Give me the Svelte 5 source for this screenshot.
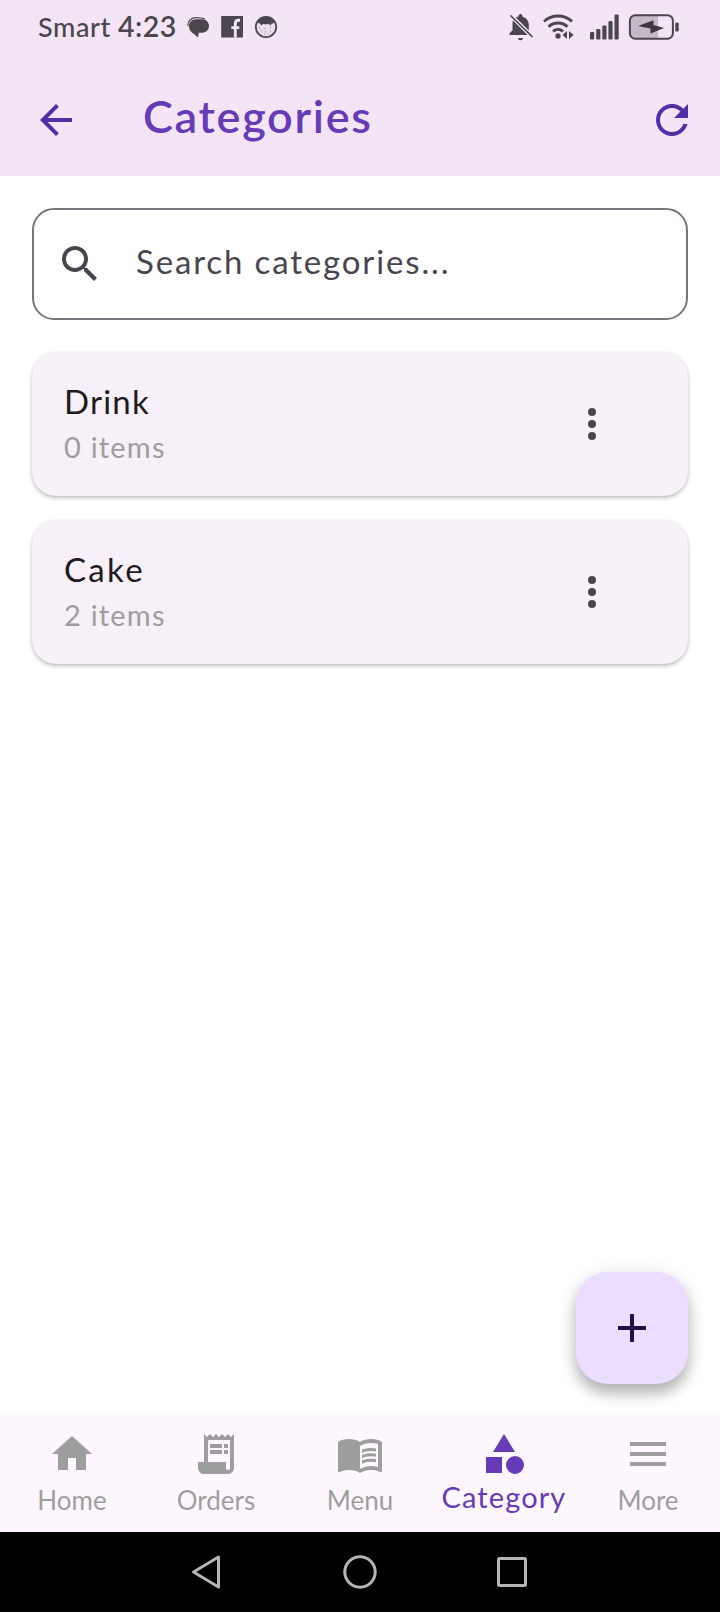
<script>
  const categories = [
    { name: 'Drink', count: '0 items', tracking: 1.2 },
    { name: 'Cake', count: '2 items', tracking: 2.3 }
  ];
  const tabs = [
    { label: 'Home', icon: 'M10 20v-6h4v6h5v-8h3L12 3 2 12h3v8z' },
    {
      label: 'Orders',
      icon: 'M19.5 3.5 18 2l-1.5 1.5L15 2l-1.5 1.5L12 2l-1.5 1.5L9 2 7.5 3.5 6 2v14H3v3c0 1.66 1.34 3 3 3h12c1.66 0 3-1.34 3-3V2l-1.5 1.5zM19 19c0 .55-.45 1-1 1s-1-.45-1-1v-3H8V5h11v14zM9 7h6v2H9zM16 7h2v2h-2zM9 10h6v2H9zM16 10h2v2h-2z'
    },
    {
      label: 'Menu',
      icon: 'M21 5c-1.11-.35-2.33-.5-3.5-.5-1.95 0-4.05.4-5.5 1.5-1.45-1.1-3.55-1.5-5.5-1.5S2.45 4.9 1 6v14.65c0 .25.25.5.5.5.1 0 .15-.05.25-.05C3.1 20.45 5.05 20 6.5 20c1.95 0 4.05.4 5.5 1.5 1.35-.85 3.8-1.5 5.5-1.5 1.65 0 3.35.3 4.75 1.05.1.05.15.05.25.05.25 0 .5-.25.5-.5V6c-.6-.45-1.25-.75-2-1zm0 13.5c-1.1-.35-2.3-.5-3.5-.5-1.7 0-4.15.65-5.5 1.5V8c1.35-.85 3.8-1.5 5.5-1.5 1.2 0 2.4.15 3.5.5v11.5zM17.5 10.5c.88 0 1.73.09 2.5.26V9.24c-.79-.15-1.64-.24-2.5-.24-1.7 0-3.24.29-4.5.83v1.66c1.13-.64 2.7-.99 4.5-.99zM13 12.49v1.66c1.13-.64 2.7-.99 4.5-.99.88 0 1.73.09 2.5.26V11.9c-.79-.15-1.64-.24-2.5-.24-1.7 0-3.24.3-4.5.83zM17.5 14.33c-1.7 0-3.24.29-4.5.83v1.66c1.13-.64 2.7-.99 4.5-.99.88 0 1.73.09 2.5.26v-1.52c-.79-.16-1.64-.24-2.5-.24z'
    },
    {
      label: 'Category',
      active: true,
      icon: 'M12 2l-5.5 9h11zM22 17.5a4.5 4.5 0 1 1-9 0a4.5 4.5 0 1 1 9 0zM3 13.5h8v8H3z'
    },
    { label: 'More', icon: 'M3 18h18v-2H3v2zm0-5h18v-2H3v2zm0-7v2h18V6H3z' }
  ];
</script>

<div class="screen">
  <header>
    <div class="status">
      <span class="carrier">Smart</span>
      <span class="clock">4:23</span>
      <svg class="left-icons" width="92" height="24" viewBox="186 15 92 24">
        <path d="M187.800 26c-.3-5 3.500-8.300 8.700-8.300 4 0 6.500.4 8.500 1.500" fill="none" stroke="#4b464d" stroke-width="1.200" />
        <path d="M196 19.300h5.500c4.500 0 7.500 2.900 7.500 6.700 0 4-3.200 6.800-7.500 6.800h-2.800c-.3 1.500-.2 3.500-.7 5-1.600-2.200-4-3.500-6-5.300-2-1.800-3-3.800-3-6.300 0-4 2.800-6.900 7-6.900z" fill="#4b464d" />
        <path d="M221.200 16H243v21.500h-21.800z" fill="#4b464d" />
        <path d="M240 20.300h-1.500c-2.200 0-3.200 1.200-3.200 3.400V37.500M231.300 27.600h8" fill="none" stroke="#f3e5f5" stroke-width="2.900" />
        <circle cx="266" cy="27" r="10.200" fill="#e9dcec" stroke="#4b464d" stroke-width="1.800" />
        <path d="M258 22c2-4 5-5.500 8-5.500s6.500 2 8.500 5.500c-1 1.500-2 1.700-3 1.500l-.7 2-2.300-1.800c-2 .8-3.500.8-5 0L261 25.500l-.7-2c-1.200.1-2-.2-2.300-1.500z" fill="#4b464d" />
        <path d="M259 27.500h1m4 1h1m5-1h1M261 31h1m3 1h1m4-1h1m-7 3.500h1m3-.5h1" stroke="#9d93a0" stroke-width="1" />
      </svg>
      <svg class="right-icons" width="174" height="32" viewBox="508 11 174 32">
        <g fill="#4b464d">
          <path d="M520.500 14a2 2 0 0 1 2 2v.7c4 1 6.300 4.300 6.300 8.300v5.500l-13-13c1-.5 1.700-.7 2.700-.9V16a2 2 0 0 1 2-2zM513 20.500l14.500 14.500h-18v-1.800l3-3V25c0-1.700 0-3 .5-4.500zM518 38h5a2.500 2.300 0 0 1-5 0z" />
          <path d="M510.500 15.500 532.500 37" stroke="#4b464d" stroke-width="1.700" />
          <circle cx="558" cy="36" r="2.700" />
          <path d="M567 31v8l-4.500-4zM569 31v8l4.500-4z" />
          <rect x="590" y="32" width="4.200" height="7.500" rx="1.300" />
          <rect x="596.200" y="29" width="4.200" height="10.500" rx="1.300" />
          <rect x="602.300" y="25.500" width="4.200" height="14" rx="1.300" />
          <rect x="608.400" y="21" width="4.200" height="18.500" rx="1.300" />
          <rect x="614.500" y="14.500" width="4.200" height="25" rx="1.300" />
        </g>
        <path d="M544 21.500c8-7.300 20-7.300 28 0M548.500 26.800c5.500-5 13.500-5 19 0M553 31.300c3-2.600 7-2.600 10 0" fill="none" stroke="#4b464d" stroke-width="2.900" />
        <path d="M636 16h22v22h-22q-5 0-5-5V21q0-5 5-5z" fill="#c5b9c9" />
        <rect x="629.900" y="15.200" width="43" height="23.500" rx="5.500" fill="none" stroke="#4b464d" stroke-width="2" />
        <rect x="675.300" y="22.500" width="3.400" height="9" rx="1.200" fill="#4b464d" />
        <path d="M653.500 20.200v4.900L664.200 28 650.500 33.500v-5L638 26z" fill="#3d383f" />
      </svg>
    </div>
    <div class="appbar">
      <svg class="ic back" viewBox="0 0 24 24"><path d="M20 11H7.830l5.590-5.590L12 4l-8 8 8 8 1.410-1.410L7.830 13H20v-2z" /></svg>
      <h1>Categories</h1>
      <svg class="ic" viewBox="0 0 24 24"><path d="M17.650 6.350C16.200 4.900 14.210 4 12 4c-4.420 0-7.990 3.580-7.990 8s3.570 8 7.990 8c3.730 0 6.840-2.550 7.730-6h-2.080c-.82 2.330-3.040 4-5.650 4-3.310 0-6-2.690-6-6s2.690-6 6-6c1.660 0 3.140.69 4.220 1.780L13 11h7V4l-2.350 2.350z" /></svg>
    </div>
  </header>

  <main>
    <div class="search">
      <svg class="ic" viewBox="0 0 24 24"><path d="M15.500 14h-.79l-.28-.27C15.410 12.590 16 11.110 16 9.500 16 5.910 13.090 3 9.500 3S3 5.910 3 9.500 5.910 16 9.500 16c1.610 0 3.090-.59 4.230-1.570l.27.28v.79l5 4.990L20.490 19l-4.990-5zm-6 0C7.010 14 5 11.990 5 9.500S7.010 5 9.500 5 14 7.010 14 9.500 11.990 14 9.500 14z" /></svg>
      <span>Search categories...</span>
    </div>
    {#each categories as c}
      <section class="card">
        <div class="info">
          <span class="name" style="letter-spacing: {c.tracking}px">{c.name}</span>
          <span class="count">{c.count}</span>
        </div>
        <svg class="ic" viewBox="0 0 24 24"><circle cx="12" cy="6" r="2" /><circle cx="12" cy="12" r="2" /><circle cx="12" cy="18" r="2" /></svg>
      </section>
    {/each}
    <button class="fab" aria-label="Add category">
      <svg class="ic" viewBox="0 0 24 24"><path d="M19 13h-6v6h-2v-6H5v-2h6V5h2v6h6v2z" /></svg>
    </button>
  </main>

  <nav>
    {#each tabs as t}
      <div class="tab" class:active={t.active}>
        <svg class="ic" viewBox="0 0 24 24"><path fill-rule={t.active ? 'nonzero' : 'evenodd'} d={t.icon} /></svg>
        <span>{t.label}</span>
      </div>
    {/each}
  </nav>

  <footer>
    <svg width="36" height="40" viewBox="0 0 36 40"><path d="M30.500 5v30L5.500 20z" /></svg>
    <svg class="home-key" width="40" height="40" viewBox="0 0 40 40"><circle cx="20" cy="20" r="15.200" /></svg>
    <svg width="36" height="40" viewBox="0 0 36 40"><rect x="4.500" y="6.500" width="27" height="27" rx="1" /></svg>
  </footer>
</div>

<style>
  :global(body) { margin: 0; background: #fff; }
  .screen {
    width: 720px; height: 1612px; display: flex; flex-direction: column;
    font-family: Lato, "Liberation Sans", sans-serif; background: #fff; overflow: hidden;
  }
  .ic { width: 48px; height: 48px; flex: none; display: block; fill: currentColor; }
  svg { flex: none; }
  header { background: #f3e5f5; height: 176px; flex: none; }
  .status { height: 54px; padding: 0 38px; display: flex; align-items: center; color: #4b464d; font-weight: 600; white-space: nowrap; }
  .status span { padding-bottom: 2px; }
  .carrier { font-size: 27px; width: 80px; letter-spacing: 0.6px; font-weight: 500; }
  .clock { font-size: 28.5px; width: 68px; letter-spacing: 0.5px; }
  .right-icons { margin-left: auto; }
  .appbar { height: 112px; margin-top: 10px; padding: 0 24px 0 32px; display: flex; align-items: center; color: #512da8; }
  h1 { margin: 0; padding: 0 0 8px 63px; flex: 1; font-size: 45px; line-height: 52px; font-weight: 600; color: #673ab7; letter-spacing: 1.7px; }
  main { flex: 1; min-height: 0; padding: 32px; display: flex; flex-direction: column; box-sizing: border-box; }
  .search { height: 112px; flex: none; box-sizing: border-box; border: 2px solid #79747e; border-radius: 22px; margin-bottom: 32px; padding-left: 22px; display: flex; align-items: center; gap: 32px; color: #49454f; }
  .search span { font-size: 33px; line-height: 40px; letter-spacing: 1.85px; padding-bottom: 7px; }
  .card { height: 144px; flex: none; box-sizing: border-box; margin-bottom: 24px; border-radius: 24px; background: #f7f0f8; padding: 0 72px 0 32px; display: flex; align-items: center; justify-content: space-between; color: #49454f; box-shadow: 0 2px 4px rgba(0,0,0,.22), 0 1px 2px rgba(0,0,0,.08); }
  .info { display: flex; flex-direction: column; padding-bottom: 2px; }
  .name { font-size: 33px; line-height: 48px; color: #1d1b20; }
  .count { font-size: 29px; line-height: 44px; letter-spacing: 1.2px; color: #9e9e9e; }
  .fab { align-self: flex-end; margin-top: auto; width: 112px; height: 112px; border: 0; border-radius: 32px; padding: 32px; flex: none; background: #eaddff; color: #21104a; box-shadow: 0 10px 14px rgba(0,0,0,.22), 0 4px 20px rgba(0,0,0,.14); }
  nav { height: 116px; flex: none; background: #fef7ff; display: grid; grid-template-columns: repeat(5, 144px); box-shadow: 0 -2px 14px rgba(0,0,0,.03); }
  .tab { display: flex; flex-direction: column; align-items: center; padding-top: 14px; color: #9e9e9e; white-space: nowrap; }
  .tab span { font-size: 26px; line-height: 32px; margin-top: 6px; }
  .tab.active { color: #673ab7; }
  .tab.active span { font-size: 29px; margin-top: 3px; letter-spacing: 1.1px; }
  footer { height: 80px; flex: none; background: #000; display: flex; align-items: center; padding-left: 188px; gap: 115px; }
  footer svg { fill: none; stroke: #b5b5b5; stroke-width: 3; stroke-linejoin: round; }
  .home-key { margin: 0 -1px 0 1px; }
</style>
